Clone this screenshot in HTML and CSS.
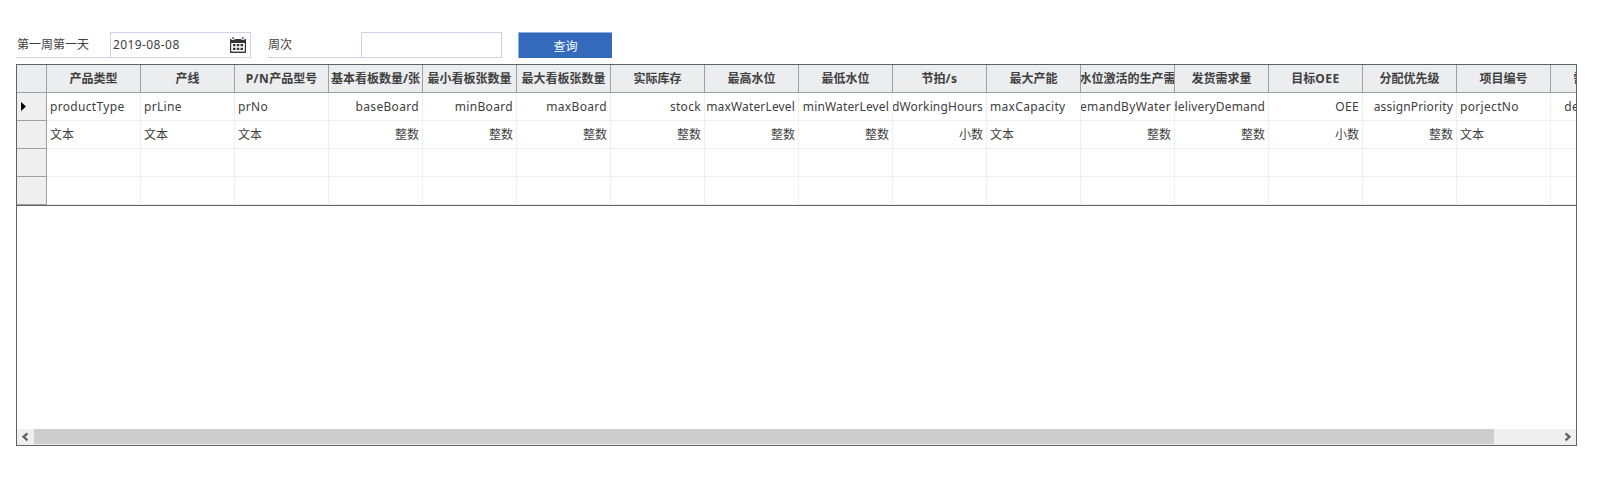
FILE: index.html
```html
<!DOCTYPE html>
<html lang="zh-CN">
<head>
<meta charset="utf-8">
<title>查询</title>
<link rel="stylesheet" href="styles.css">
</head>
<body>
<form class="filters">
  <div class="field">
    <label class="label">第一周第一天</label>
    <div class="input"><span class="date">2019-08-08</span>
      <svg class="calendar" width="16" height="16" viewBox="0 0 16 16"><path fill="#353535" d="M0 2h1.5v1h3V2h7v1h3V2H16v14H0z"/><path fill="#555" d="M2.4 0h1.4v2.2H2.4zM12.2 0h1.4v2.2h-1.4z"/><path fill="#fff" d="M1.2 6h13.6v8.6H1.2z"/><path fill="#353535" d="M3 7h2.5v2.3H3zM6.8 7h2.5v2.3H6.8zM10.5 7H13v2.3h-2.5zM3 10.8h2.5V13H3zM6.8 10.8h2.5V13H6.8zM10.5 10.8H13V13h-2.5z"/></svg>
    </div>
  </div>
  <div class="field">
    <label class="label">周次</label>
    <div class="input"></div>
  </div>
  <button class="query" type="button">查询</button>
</form>
<main class="panel">
  <div class="viewport">
    <div class="row head"><div class="mark"></div><div class="cell"><span>产品类型</span></div><div class="cell"><span>产线</span></div><div class="cell"><span><span class="spaced">P/N</span>产品型号</span></div><div class="cell"><span>基本看板数量/张</span></div><div class="cell"><span>最小看板张数量</span></div><div class="cell"><span>最大看板张数量</span></div><div class="cell"><span>实际库存</span></div><div class="cell"><span>最高水位</span></div><div class="cell"><span>最低水位</span></div><div class="cell"><span>节拍<span class="spaced">/s</span></span></div><div class="cell"><span>最大产能</span></div><div class="cell"><span>水位激活的生产需</span></div><div class="cell"><span>发货需求量</span></div><div class="cell"><span>目标<span class="spaced">OEE</span></span></div><div class="cell"><span>分配优先级</span></div><div class="cell"><span>项目编号</span></div><div class="cell"><span>需求日期</span></div></div>
    <div class="row names"><div class="mark"><svg class="pointer" width="5" height="9" viewBox="0 0 5 9"><path d="M0 0L5 4.5 0 9z"/></svg></div><div class="cell">productType</div><div class="cell">prLine</div><div class="cell">prNo</div><div class="cell num">baseBoard</div><div class="cell num">minBoard</div><div class="cell num">maxBoard</div><div class="cell num">stock</div><div class="cell num tight">maxWaterLevel</div><div class="cell num tight">minWaterLevel</div><div class="cell num tight">dWorkingHours</div><div class="cell">maxCapacity</div><div class="cell num">emandByWater</div><div class="cell num tight">deliveryDemand</div><div class="cell num">OEE</div><div class="cell num tight">assignPriority</div><div class="cell">porjectNo</div><div class="cell num">demandDate</div></div>
    <div class="row"><div class="mark"></div><div class="cell">文本</div><div class="cell">文本</div><div class="cell">文本</div><div class="cell num">整数</div><div class="cell num">整数</div><div class="cell num">整数</div><div class="cell num">整数</div><div class="cell num">整数</div><div class="cell num">整数</div><div class="cell num">小数</div><div class="cell">文本</div><div class="cell num">整数</div><div class="cell num">整数</div><div class="cell num">小数</div><div class="cell num">整数</div><div class="cell">文本</div><div class="cell num"></div></div>
    <div class="row"><div class="mark"></div><div class="cell"></div><div class="cell"></div><div class="cell"></div><div class="cell"></div><div class="cell"></div><div class="cell"></div><div class="cell"></div><div class="cell"></div><div class="cell"></div><div class="cell"></div><div class="cell"></div><div class="cell"></div><div class="cell"></div><div class="cell"></div><div class="cell"></div><div class="cell"></div><div class="cell"></div></div>
    <div class="row"><div class="mark"></div><div class="cell"></div><div class="cell"></div><div class="cell"></div><div class="cell"></div><div class="cell"></div><div class="cell"></div><div class="cell"></div><div class="cell"></div><div class="cell"></div><div class="cell"></div><div class="cell"></div><div class="cell"></div><div class="cell"></div><div class="cell"></div><div class="cell"></div><div class="cell"></div><div class="cell"></div></div>
  </div>
  <div class="scrollbar">
    <svg class="arrow" width="17" height="15" viewBox="0 0 17 15"><path d="M10.5 4.3L6.5 7.8l4 3.5"/></svg>
    <div class="track"><div class="thumb"></div></div>
    <svg class="arrow" width="17" height="15" viewBox="0 0 17 15"><path d="M6.5 4.3l4 3.5-4 3.5"/></svg>
  </div>
</main>
</body>
</html>
```
FILE: styles.css
```css
* { box-sizing: border-box; }
body {
  margin: 0;
  padding: 32px 43px 0 16px;
  background: #fff;
  color: #404040;
  font: 12px/16px "Noto Sans", "Noto Sans CJK SC", sans-serif;
}
.filters { display: flex; height: 26px; margin: 0 0 6px; }
.field { display: flex; width: 235px; margin-right: 16px; }
.label {
  width: 94px;
  padding: 5px 1px 3px;
  border-bottom: 1px solid #d3d1e7;
}
.input {
  display: flex;
  justify-content: space-between;
  width: 141px;
  padding: 4px 4px 0 2px;
  border: 1px solid #d3d1e7;
}
.date { letter-spacing: .4px; }
.calendar { display: block; }
.query {
  width: 94px;
  height: 26px;
  padding: 2px 0 0;
  border: solid #8fb0dc;
  border-width: 1px 0 0 1px;
  background: #336abc;
  color: #fff;
  font: inherit;
}
.panel {
  display: flex;
  flex-direction: column;
  width: 1561px;
  height: 382px;
  border: 1px solid #606164;
}
.viewport { flex: 1; overflow: hidden; }
.row { display: flex; width: 1628px; height: 28px; }
.row:last-child { height: 29px; border-bottom: 1px solid #606164; }
.mark {
  display: flex;
  align-items: center;
  width: 30px;
  padding-left: 4px;
  border: solid #a0a0a0;
  border-width: 0 1px 1px 0;
  background: #efefef;
}
.cell {
  width: 94px;
  padding: 6px 3px 0;
  overflow: hidden;
  border: solid #efefef;
  border-width: 0 1px 1px 0;
  white-space: nowrap;
}
.num { display: flex; justify-content: flex-end; }
.names .cell { letter-spacing: .32px; }
.names .tight { letter-spacing: .15px; }
.head .mark, .head .cell { border-color: #a0a0a0; background: #ebedef; }
.head .cell { display: flex; justify-content: center; padding: 6px 0 0; font-weight: 700; }
.spaced { letter-spacing: .5px; }
.pointer { display: block; fill: #000; }
.scrollbar { display: flex; height: 16px; background: #efefef; }
.arrow { display: block; fill: none; stroke: #606060; stroke-width: 2.2; }
.track { flex: 1; }
.thumb { width: 1460px; height: 15px; background: #cdcdcd; }
```
